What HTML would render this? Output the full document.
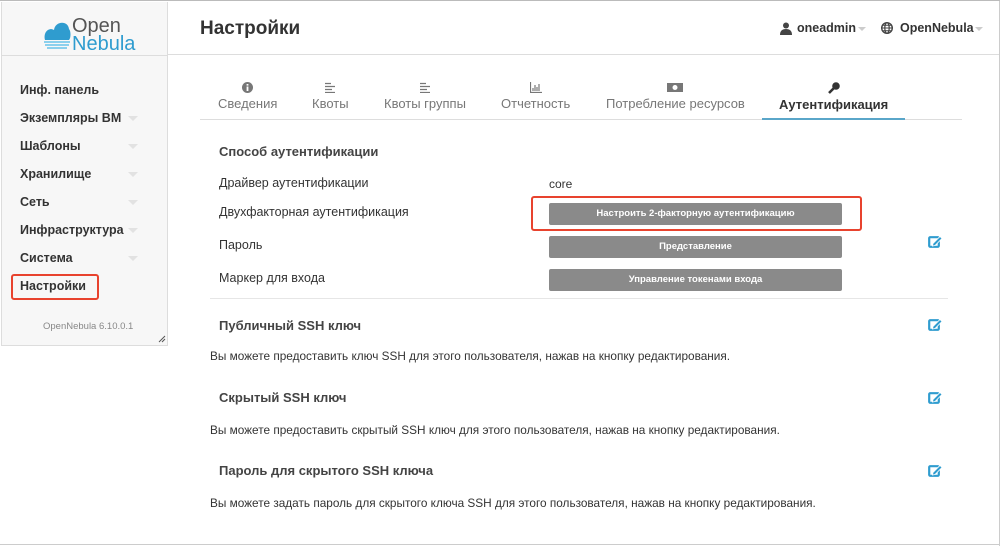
<!DOCTYPE html>
<html><head><meta charset="utf-8"><style>
*{box-sizing:border-box;margin:0;padding:0}
body{width:1000px;height:545px;background:#fff;font-family:"Liberation Sans",sans-serif;color:#333;position:relative;overflow:hidden;border-top:1px solid #bbb}
.abs{position:absolute}
#side{left:1px;top:1px;width:167px;height:344px;background:#f7f7f7;border-right:1px solid #ddd;border-bottom:1px solid #ddd;border-left:1px solid #ddd}
#side .hl{position:absolute;left:0;right:0;top:53px;border-top:1px solid #ddd}
.mi{position:absolute;left:18px;font-size:12.5px;font-weight:bold;color:#333}
.car{position:absolute;left:126px;width:0;height:0;border-left:5px solid transparent;border-right:5px solid transparent;border-top:5px solid #e2e2e2}
#hdr{left:168px;top:0;right:0;height:54px;border-bottom:1px solid #ddd}
.tab{position:absolute;font-size:13px;color:#777;text-align:center}
.tab svg{display:block;margin:0 auto 3px}
.lbl{position:absolute;left:219px;font-size:12.5px;color:#333}
.btn{position:absolute;left:549px;width:293px;height:22px;background:#8a8a8a;border-radius:2px;color:#fff;font-size:9.5px;font-weight:bold;text-align:center;line-height:22px}
.h{position:absolute;left:219px;font-size:13px;font-weight:bold;color:#444}
.t{position:absolute;left:210px;font-size:11.8px;color:#333}
.ed{position:absolute;left:928px}
</style></head><body>
<div id="side" class="abs">
 <div class="hl"></div>
 <svg class="abs" style="left:41px;top:16px" width="28" height="32" viewBox="0 0 28 32"><path d="M2 22 C0 14 6 9 11 12 C12 3 25 2 26 11 C28 13 28 20 26 22 Z" fill="#2f9ccf"/><path d="M1 24 H27 M2 27 H26 M4 30 H24" stroke="#7ccbec" stroke-width="1.8"/></svg>
 <div class="abs" style="left:70px;top:15px;font-size:20px;color:#555;line-height:19px">Open</div>
 <div class="abs" style="left:70px;top:33px;font-size:20px;color:#2f9ccf;line-height:19px">Nebula</div>
 <div class="mi" style="top:81px">Инф. панель</div>
 <div class="mi" style="top:109px">Экземпляры ВМ</div><div class="car" style="top:114px"></div>
 <div class="mi" style="top:137px">Шаблоны</div><div class="car" style="top:142px"></div>
 <div class="mi" style="top:165px">Хранилище</div><div class="car" style="top:170px"></div>
 <div class="mi" style="top:193px">Сеть</div><div class="car" style="top:198px"></div>
 <div class="mi" style="top:221px">Инфраструктура</div><div class="car" style="top:226px"></div>
 <div class="mi" style="top:249px">Система</div><div class="car" style="top:254px"></div>
 <div class="abs" style="left:9px;top:272px;width:88px;height:26px;border:2px solid #e8432e;border-radius:3px"></div>
 <div class="mi" style="top:277px">Настройки</div>
 <div class="abs" style="left:41px;top:319px;font-size:9.5px;color:#888">OpenNebula 6.10.0.1</div>
 <svg class="abs" style="left:156px;top:333px" width="8" height="8"><path d="M1 7 L7 1 M4 7 L7 4" stroke="#555"/></svg>
</div>
<div id="hdr" class="abs"></div>
<div class="abs" style="left:200px;top:17px;font-size:19px;font-weight:bold;color:#333">Настройки</div>
<svg class="abs" style="left:780px;top:21px" width="12" height="13"><circle cx="6" cy="3.5" r="3" fill="#444"/><path d="M0 13 Q0 7 6 7 Q12 7 12 13Z" fill="#444"/></svg>
<div class="abs" style="left:797px;top:20px;font-size:12.5px;font-weight:bold;color:#333">oneadmin</div>
<div class="car" style="left:858px;top:26px;border-top-color:#ccc;border-left-width:4px;border-right-width:4px;border-top-width:4px"></div>
<svg class="abs" style="left:881px;top:21px" width="12" height="12"><circle cx="6" cy="6" r="5.3" fill="none" stroke="#444" stroke-width="1.4"/><ellipse cx="6" cy="6" rx="2.2" ry="5.3" fill="none" stroke="#444" stroke-width="1.2"/><path d="M1 6H11M2 3.3H10M2 8.7H10" stroke="#444"/></svg>
<div class="abs" style="left:900px;top:20px;font-size:12.5px;font-weight:bold;color:#333">OpenNebula</div>
<div class="car" style="left:975px;top:26px;border-top-color:#ccc;border-left-width:4px;border-right-width:4px;border-top-width:4px"></div>

<div class="tab" style="left:218px;top:81px"><svg width="11" height="11"><circle cx="5.5" cy="5.5" r="5.5" fill="#777"/><rect x="4.6" y="4.5" width="1.8" height="4.5" fill="#fff"/><rect x="4.6" y="2" width="1.8" height="1.6" fill="#fff"/></svg>Сведения</div>
<div class="tab" style="left:312px;top:81px"><svg width="10" height="11"><path d="M0 1.5H6M0 4.5H10M0 7.5H7M0 10.5H10" stroke="#777" stroke-width="1.3"/></svg>Квоты</div>
<div class="tab" style="left:384px;top:81px"><svg width="10" height="11"><path d="M0 1.5H6M0 4.5H10M0 7.5H7M0 10.5H10" stroke="#777" stroke-width="1.3"/></svg>Квоты группы</div>
<div class="tab" style="left:501px;top:81px"><svg width="12" height="11"><path d="M0.5 0V10.5H12M3 9V6M5 9V3M7 9V5M9 9V2" fill="none" stroke="#777" stroke-width="1.2"/></svg>Отчетность</div>
<div class="tab" style="left:606px;top:81px"><svg width="16" height="11"><rect x="0" y="1" width="16" height="9" fill="#777"/><circle cx="8" cy="5.5" r="2.5" fill="#fff"/></svg>Потребление ресурсов</div>
<div class="tab" style="left:779px;top:81px;color:#333;font-weight:bold"><svg width="12" height="12"><circle cx="8" cy="4" r="3.8" fill="#333"/><path d="M6 6 L1 11" stroke="#333" stroke-width="2.6"/></svg>Аутентификация</div>
<div class="abs" style="left:200px;top:118px;width:762px;border-top:1px solid #ddd"></div>
<div class="abs" style="left:762px;top:117px;width:143px;border-top:2px solid #5aa6c9"></div>

<div class="h" style="top:143px">Способ аутентификации</div>
<div class="lbl" style="top:175px">Драйвер аутентификации</div>
<div class="abs" style="left:549px;top:176px;font-size:12px">core</div>
<div class="lbl" style="top:204px">Двухфакторная аутентификация</div>
<div class="btn" style="top:202px">Настроить 2-факторную аутентификацию</div>
<div class="abs" style="left:531px;top:195px;width:331px;height:35px;border:2px solid #e8432e;border-radius:3px"></div>
<div class="lbl" style="top:237px">Пароль</div>
<div class="btn" style="top:235px">Представление</div>
<div class="lbl" style="top:270px">Маркер для входа</div>
<div class="btn" style="top:268px">Управление токенами входа</div>
<div class="abs" style="left:210px;top:297px;width:738px;border-top:1px solid #e6e6e6"></div>

<div class="h" style="top:317px">Публичный SSH ключ</div>
<div class="t" style="top:348px">Вы можете предоставить ключ SSH для этого пользователя, нажав на кнопку редактирования.</div>
<div class="h" style="top:389px">Скрытый SSH ключ</div>
<div class="t" style="top:422px">Вы можете предоставить скрытый SSH ключ для этого пользователя, нажав на кнопку редактирования.</div>
<div class="h" style="top:462px">Пароль для скрытого SSH ключа</div>
<div class="t" style="top:495px">Вы можете задать пароль для скрытого ключа SSH для этого пользователя, нажав на кнопку редактирования.</div>

<svg class="ed" style="top:233px" width="15" height="14" viewBox="0 0 15 14"><rect x="1.2" y="3.2" width="9.6" height="9.6" rx="1" fill="none" stroke="#2f9ccf" stroke-width="2.2"/><path d="M5 9.5 L12 2.5 L14 4.5 L7 11.5 L4.5 12Z" fill="#2f9ccf" stroke="#fff" stroke-width=".8"/></svg>
<svg class="ed" style="top:316px" width="15" height="14" viewBox="0 0 15 14"><rect x="1.2" y="3.2" width="9.6" height="9.6" rx="1" fill="none" stroke="#2f9ccf" stroke-width="2.2"/><path d="M5 9.5 L12 2.5 L14 4.5 L7 11.5 L4.5 12Z" fill="#2f9ccf" stroke="#fff" stroke-width=".8"/></svg>
<svg class="ed" style="top:389px" width="15" height="14" viewBox="0 0 15 14"><rect x="1.2" y="3.2" width="9.6" height="9.6" rx="1" fill="none" stroke="#2f9ccf" stroke-width="2.2"/><path d="M5 9.5 L12 2.5 L14 4.5 L7 11.5 L4.5 12Z" fill="#2f9ccf" stroke="#fff" stroke-width=".8"/></svg>
<svg class="ed" style="top:462px" width="15" height="14" viewBox="0 0 15 14"><rect x="1.2" y="3.2" width="9.6" height="9.6" rx="1" fill="none" stroke="#2f9ccf" stroke-width="2.2"/><path d="M5 9.5 L12 2.5 L14 4.5 L7 11.5 L4.5 12Z" fill="#2f9ccf" stroke="#fff" stroke-width=".8"/></svg>
<div class="abs" style="right:0;top:0;height:545px;border-right:1px solid #ccc"></div>
<div class="abs" style="left:0;bottom:0;width:1000px;border-bottom:1px solid #ccc"></div>
</body></html>
